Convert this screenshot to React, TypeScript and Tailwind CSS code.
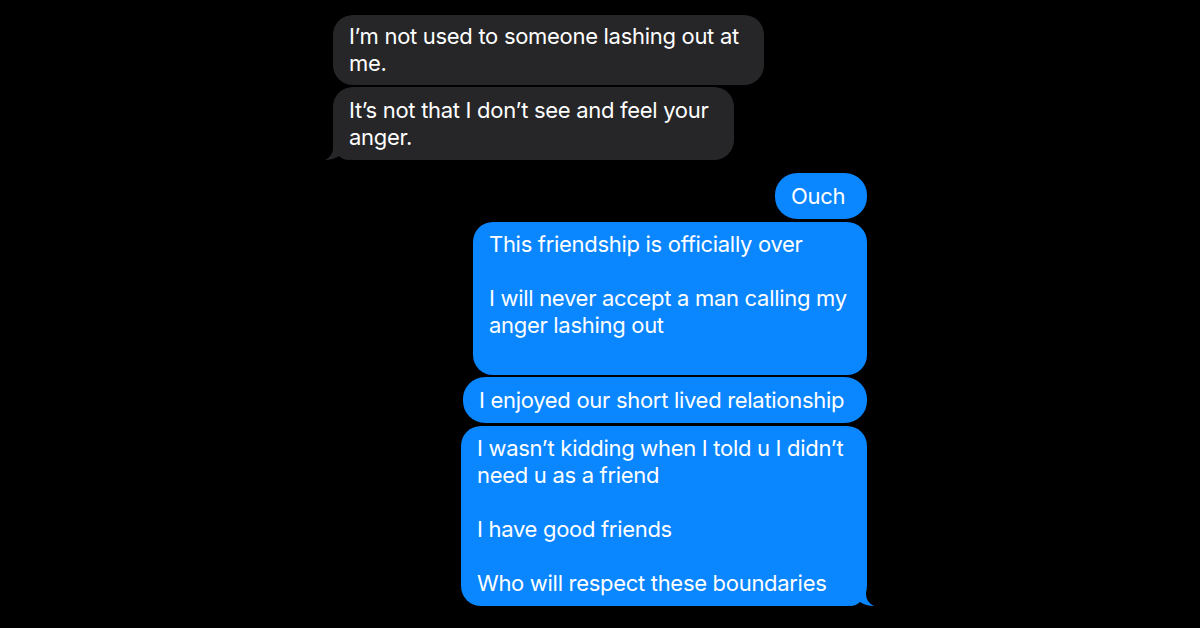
import React from "react";

const font = { fontFamily: "Inter, 'Noto Sans', sans-serif" };

function LeftTail() {
  return (
    <svg
      className="absolute bottom-0 left-[-8px]"
      width="24"
      height="22"
      viewBox="0 0 24 22"
    >
      <path d="M8 0 L8 10 Q8 18 0 22 Q8 22 14 18 Q18 22 24 22 L24 0 Z" fill="#262628" />
    </svg>
  );
}

function RightTail() {
  return (
    <svg
      className="absolute bottom-0 right-[-7px]"
      width="24"
      height="22"
      viewBox="0 0 24 22"
    >
      <path d="M16 0 L16 10 Q16 18 24 22 Q16 22 10 18 Q6 22 0 22 L0 0 Z" fill="#0a86ff" />
    </svg>
  );
}

export default function App() {
  return (
    <div className="w-[1200px] h-[628px] bg-black overflow-hidden" style={font}>
      <div className="w-[534px] mx-auto pt-[15px] flex flex-col text-white text-[22px] leading-[27px] tracking-[-0.3px]">
        <div className="self-start w-[431px] bg-[#262628] rounded-[20px] pl-4 pt-2 pb-2">
          I’m not used to someone lashing out at
          <br />
          me.
        </div>
        <div className="relative self-start w-[401px] mt-[2px] bg-[#262628] rounded-[20px] pl-4 pt-[10px] pb-[9px]">
          It’s not that I don’t see and feel your
          <br />
          anger.
          <LeftTail />
        </div>
        <div className="self-end w-[92px] mt-[13px] bg-[#0a86ff] rounded-[22px] pl-4 pt-[10px] pb-[9px]">
          Ouch
        </div>
        <div className="self-end w-[394px] mt-[3px] bg-[#0a86ff] rounded-[20px] pl-4 pt-[9px] pb-[9px]">
          This friendship is officially over
          <br />
          <br />
          I will never accept a man calling my
          <br />
          anger lashing out
          <br />
          &nbsp;
        </div>
        <div className="self-end w-[404px] mt-[2px] bg-[#0a86ff] rounded-[22px] pl-4 pt-[10px] pb-[9px]">
          I enjoyed our short lived relationship
        </div>
        <div className="relative self-end w-[406px] mt-[3px] bg-[#0a86ff] rounded-[20px] pl-4 pt-[9px] pb-[9px]">
          I wasn’t kidding when I told u I didn’t
          <br />
          need u as a friend
          <br />
          <br />
          I have good friends
          <br />
          <br />
          Who will respect these boundaries
          <RightTail />
        </div>
      </div>
    </div>
  );
}
